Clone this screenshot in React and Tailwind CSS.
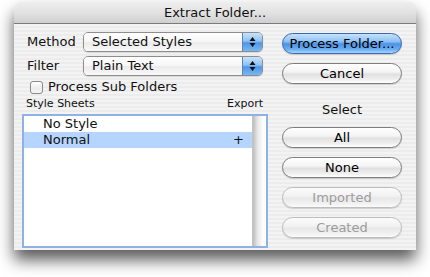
import React from "react";

const stripes =
  "bg-[repeating-linear-gradient(180deg,#ececec_0px,#ececec_2px,#f3f3f3_2px,#f3f3f3_4px)]";

function AquaButton({ label, variant = "normal" }) {
  const styles = {
    default:
      "border-[#3867b4] bg-[linear-gradient(180deg,#c6e2fc_0%,#8cc0f3_40%,#4b92e6_52%,#69adf1_80%,#a6d6fb_100%)] text-black",
    normal:
      "border-[#7d7d7d] bg-[linear-gradient(180deg,#ffffff_0%,#f4f4f4_42%,#e0e0e0_54%,#efefef_82%,#ffffff_100%)] text-black",
    disabled:
      "border-[#bdbdbd] bg-[linear-gradient(180deg,#fbfbfb_0%,#f2f2f2_42%,#e8e8e8_54%,#f1f1f1_82%,#fbfbfb_100%)] text-[#9c9c9c]",
  };
  return (
    <div
      className={`h-[21px] w-[120px] rounded-full border flex items-center justify-center text-[13px] leading-none shadow-[0_1px_1px_rgba(0,0,0,0.15)] ${styles[variant]}`}
    >
      {label}
    </div>
  );
}

function Popup({ value }) {
  return (
    <div className="flex h-[20px] w-[180px] rounded-[5px] border border-[#8d8d8d] overflow-hidden shadow-[0_1px_1px_rgba(0,0,0,0.12)]">
      <div className="flex-1 flex items-center pl-[8px] text-[13px] bg-[linear-gradient(180deg,#ffffff_0%,#f6f6f6_50%,#ebebeb_52%,#f8f8f8_100%)]">
        {value}
      </div>
      <div className="w-[20px] flex items-center justify-center border-l border-[#5a83c4] bg-[linear-gradient(180deg,#c8e3fc_0%,#8dc1f4_45%,#4f95e7_55%,#7ab8f2_100%)]">
        <svg width="7" height="12" viewBox="0 0 7 12">
          <path d="M3.5 1 L6.5 5 L0.5 5 Z" fill="#111" />
          <path d="M0.5 7 L6.5 7 L3.5 11 Z" fill="#111" />
        </svg>
      </div>
    </div>
  );
}

export default function App() {
  return (
    <div
      className="w-[430px] h-[277px] bg-white pl-[14px] pt-[2px] text-[#111]"
      style={{ fontFamily: '"DejaVu Sans", "Liberation Sans", sans-serif' }}
    >
      <div className={`w-[402px] h-[248px] rounded-t-[7px] flex flex-col shadow-[0_10px_16px_rgba(0,0,0,0.65)] ${stripes}`}>
        <div className="h-[22px] shrink-0 rounded-t-[7px] border-b border-[#7a7a7a] bg-[linear-gradient(180deg,#eeeeee_0%,#e2e2e2_50%,#cfcfcf_100%)] flex items-center justify-center text-[13px]">
          Extract Folder...
        </div>
        <div className="flex flex-1 pl-[8px] pr-[14px]">
          <div className="w-[246px] flex flex-col pt-[8px]">
            <div className="flex items-center h-[20px] pr-[5px]">
              <span className="w-[61px] pl-[5px] text-[13px]">Method</span>
              <Popup value="Selected Styles" />
            </div>
            <div className="flex items-center h-[20px] mt-[4px] pr-[5px]">
              <span className="w-[61px] pl-[5px] text-[13px]">Filter</span>
              <Popup value="Plain Text" />
            </div>
            <div className="flex items-center h-[14px] mt-[4px] pl-[8px]">
              <div className="w-[13px] h-[13px] rounded-[3px] border border-[#8a8a8a] bg-[linear-gradient(180deg,#ffffff_0%,#ececec_60%,#f7f7f7_100%)]" />
              <span className="ml-[5px] text-[13px]">Process Sub Folders</span>
            </div>
            <div className="flex justify-between items-center h-[12px] mt-[4px] pl-[4px] pr-[5px] text-[11px]">
              <span>Style Sheets</span>
              <span>Export</span>
            </div>
            <div className="mt-[4px] h-[134px] border-2 border-[#8fb2e4] bg-white flex">
              <div className="flex-1 flex flex-col text-[13px]">
                <div className="h-[16px] flex items-center pl-[19px]">No Style</div>
                <div className="h-[16px] flex items-center justify-between pl-[19px] pr-[8px] bg-[#b5d5ff]">
                  <span>Normal</span>
                  <span>+</span>
                </div>
              </div>
              <div className="w-[14px] border-l border-[#c4c4c4] bg-[linear-gradient(90deg,#bdbdbd_0%,#e6e6e6_35%,#fafafa_70%,#ffffff_100%)]" />
            </div>
          </div>
          <div className="ml-[14px] w-[120px] flex flex-col pt-[9px]">
            <AquaButton label="Process Folder..." variant="default" />
            <div className="mt-[9px]">
              <AquaButton label="Cancel" />
            </div>
            <div className="mt-[18px] h-[16px] flex items-center justify-center text-[13px]">
              Select
            </div>
            <div className="mt-[9px] flex flex-col gap-[9px]">
              <AquaButton label="All" />
              <AquaButton label="None" />
              <AquaButton label="Imported" variant="disabled" />
              <AquaButton label="Created" variant="disabled" />
            </div>
          </div>
        </div>
      </div>
    </div>
  );
}
